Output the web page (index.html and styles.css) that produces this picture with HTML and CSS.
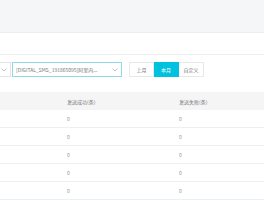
FILE: index.html
```html
<!DOCTYPE html>
<html lang="zh">
<head>
    <meta charset="UTF-8">
    <title>短信统计</title>
    <link rel="stylesheet" href="styles.css">
</head>
<body>
    <div class="topbar"></div>
    <div class="subbar"></div>
    <div class="toolbar">
        <div class="select short">
            <span class="text"></span>
            <svg class="arrow" width="6" height="4" viewBox="0 0 6 4"><path d="M0.5 0.5 L3 3 L5.5 0.5" fill="none" stroke="#aaa" stroke-width="0.7"/></svg>
        </div>
        <div class="select long focus">
            <span class="text">[DIGITAL_SMS_191865095]阿里内...</span>
            <svg class="arrow" width="6" height="4" viewBox="0 0 6 4"><path d="M0.5 0.5 L3 3 L5.5 0.5" fill="none" stroke="#aaa" stroke-width="0.7"/></svg>
        </div>
        <div class="btn-group">
            <button class="btn">上月</button>
            <button class="btn active">本月</button>
            <button class="btn">自定义</button>
        </div>
    </div>
    <div class="table">
        <div class="row head">
            <div class="cell first"></div>
            <div class="cell">发送成功(条)</div>
            <div class="cell">发送失败(条)</div>
        </div>
        <div class="row"><div class="cell first"></div><div class="cell">0</div><div class="cell">0</div></div>
        <div class="row"><div class="cell first"></div><div class="cell">0</div><div class="cell">0</div></div>
        <div class="row"><div class="cell first"></div><div class="cell">0</div><div class="cell">0</div></div>
        <div class="row"><div class="cell first"></div><div class="cell">0</div><div class="cell">0</div></div>
        <div class="row"><div class="cell first"></div><div class="cell">0</div><div class="cell">0</div></div>
    </div>
</body>
</html>
```

FILE: styles.css
```css
body {
    margin: 0;
    background: #fff;
    font-family: "Noto Sans CJK SC", "Liberation Sans", sans-serif;
    font-size: 5px;
    color: #666;
    overflow: hidden;
}
.topbar {
    height: 32px;
    background: #f5f6f8;
    border-bottom: 1px solid #eceef0;
}
.subbar {
    height: 21px;
    border-bottom: 1px solid #eceeef;
}
.toolbar {
    display: flex;
    align-items: center;
    padding: 7px 0 15px 0;
}
.select {
    box-sizing: border-box;
    height: 15px;
    border: 1px solid #e3e5e8;
    display: flex;
    align-items: center;
    justify-content: space-between;
    padding: 0 3px;
    background: #fff;
}
.select.short {
    width: 30px;
    margin-left: -19px;
}
.select.long {
    width: 110px;
    margin-left: 1px;
}
.select.focus {
    border-color: #8fd9e8;
}
.select .text {
    color: #777;
    white-space: nowrap;
}
.btn-group {
    display: flex;
    margin-left: 7px;
}
.btn {
    box-sizing: border-box;
    width: 25px;
    height: 15px;
    padding: 0;
    border: 1px solid #e6e8ea;
    background: #fff;
    color: #777;
    font-family: inherit;
    font-size: 5px;
}
.btn + .btn {
    border-left: none;
}
.btn.active {
    background: #00c1de;
    border-color: #00c1de;
    color: #fff;
}
.table {
    display: flex;
    flex-direction: column;
}
.row {
    display: grid;
    grid-template-columns: 67px 112px 1fr;
    height: 18px;
    box-sizing: border-box;
    border-bottom: 1px solid #eeeff1;
    align-items: center;
}
.row.head {
    background: #f5f5f6;
    border-bottom: none;
    color: #777;
}
.cell {
    color: #999;
}
.head .cell {
    color: #777;
}
```
